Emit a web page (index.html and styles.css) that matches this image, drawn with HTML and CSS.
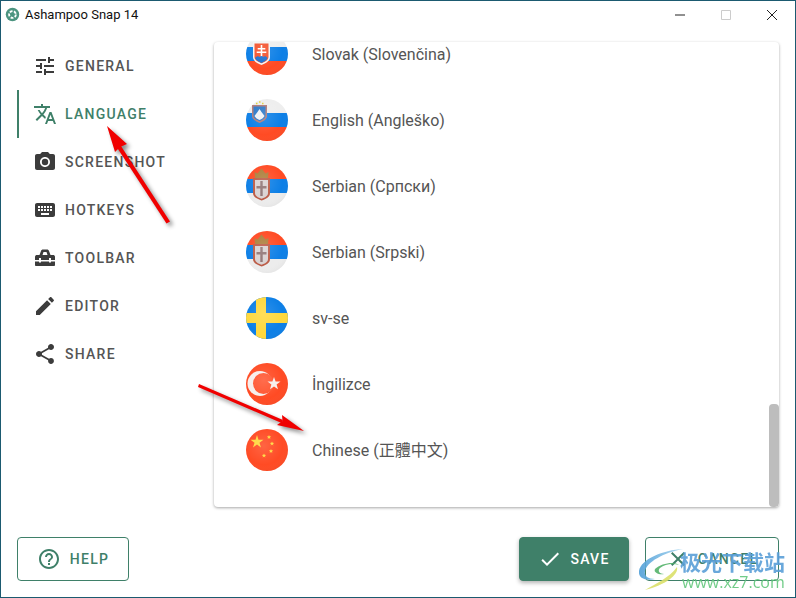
FILE: index.html
```html
<!DOCTYPE html>
<html lang="en">
<head>
  <meta charset="UTF-8" />
  <title>Ashampoo Snap 14</title>
  <link rel="stylesheet" href="styles.css">
</head>
<body>

  <svg class="defs" width="0" height="0">
    <defs>
      <radialGradient id="sheen" cx="0.42" cy="0.4" r="0.7">
        <stop offset="0" stop-color="#fff" stop-opacity="0.14"/>
        <stop offset="0.65" stop-color="#fff" stop-opacity="0"/>
        <stop offset="1" stop-color="#000" stop-opacity="0.06"/>
      </radialGradient>
      <symbol id="serbia" viewBox="0 0 42 42">
        <rect width="42" height="14" fill="#ff4b24"/>
        <rect y="14" width="42" height="14" fill="#0d7fe6"/>
        <rect y="28" width="42" height="14" fill="#ececec"/>
        <path d="M9 13L8.500 7l3 1.500L15.500 3.500l4 5 3-1.500-.5 6z" fill="#ad7f3c"/>
        <path d="M7 13h17v15c0 4-4 6-8.500 7.500C11 34 7 32 7 28z" fill="#bb5a45"/>
        <path d="M9 15h13v13c0 3-3 4.500-6.500 5.700C12 32.500 9 31 9 28z" fill="#d9d2d2"/>
        <path d="M14.300 16h2.400v5h3.800v2.400h-3.800V31h-2.400v-7.600h-3.800V21h3.800z" fill="#8f7474"/>
      </symbol>
      <linearGradient id="swirlBlue" x1="0" y1="0" x2="1" y2="0">
        <stop offset="0" stop-color="#4f9fd8"/>
        <stop offset="1" stop-color="#a9d6f0"/>
      </linearGradient>
    </defs>
  </svg>

  <div class="window">
    <header class="titlebar">
      <svg class="app-logo" viewBox="0 0 16 16">
        <circle cx="8" cy="8" r="7.200" fill="#4c9480"/>
        <circle cx="8" cy="8" r="3.600" fill="none" stroke="#fff" stroke-width="2" stroke-dasharray="3 1.520"/>
        <circle cx="8" cy="8" r="1.900" fill="#4c9480"/>
      </svg>
      <span class="app-title">Ashampoo Snap 14</span>
      <div class="win-controls">
        <span class="win-btn"><svg viewBox="0 0 10 10"><path d="M0 5h10" stroke="#222" fill="none"/></svg></span>
        <span class="win-btn"><svg viewBox="0 0 10 10"><path d="M.5.5h9v9h-9z" stroke="#ccc" fill="none"/></svg></span>
        <span class="win-btn"><svg viewBox="0 0 10 10"><path d="M0 0l10 10M10 0L0 10" stroke="#222" fill="none"/></svg></span>
      </div>
    </header>

    <div class="content">
      <nav class="sidebar">
        <a class="nav-item">
          <svg viewBox="0 0 24 24"><path d="M3 17v2h6v-2H3zM3 5v2h10V5H3zm10 16v-2h8v-2h-8v-2h-2v6h2zM7 9v2H3v2h4v2h2V9H7zm14 4v-2H11v2h10zm-6-4h2V7h4V5h-4V3h-2v6z"/></svg>
          General
        </a>
        <a class="nav-item active">
          <svg viewBox="0 0 24 24"><path d="M12.870 15.070l-2.540-2.510.03-.03c1.740-1.940 2.980-4.170 3.710-6.530H17V4h-7V2H8v2H1v1.990h11.170C11.500 7.920 10.440 9.750 9 11.350 8.070 10.320 7.300 9.190 6.690 8h-2c.73 1.630 1.730 3.170 2.980 4.560l-5.090 5.020L4 19l5-5 3.110 3.110.76-2.040zM18.500 10h-2L12 22h2l1.120-3h4.750L21 22h2l-4.500-12zm-2.620 7l1.620-4.330L19.120 17h-3.240z"/></svg>
          Language
        </a>
        <a class="nav-item">
          <svg viewBox="0 0 24 24"><circle cx="12" cy="12" r="3.200"/><path d="M9 2L7.170 4H4c-1.100 0-2 .9-2 2v12c0 1.100.9 2 2 2h16c1.100 0 2-.9 2-2V6c0-1.100-.9-2-2-2h-3.170L15 2H9zm3 15c-2.760 0-5-2.240-5-5s2.240-5 5-5 5 2.240 5 5-2.240 5-5 5z"/></svg>
          Screenshot
        </a>
        <a class="nav-item">
          <svg viewBox="0 0 24 24"><path d="M20 5H4c-1.100 0-1.990.9-1.990 2L2 17c0 1.100.9 2 2 2h16c1.100 0 2-.9 2-2V7c0-1.100-.9-2-2-2zm-9 3h2v2h-2V8zm0 3h2v2h-2v-2zM8 8h2v2H8V8zm0 3h2v2H8v-2zm-1 2H5v-2h2v2zm0-3H5V8h2v2zm9 7H8v-2h8v2zm0-4h-2v-2h2v2zm0-3h-2V8h2v2zm3 3h-2v-2h2v2zm0-3h-2V8h2v2z"/></svg>
          Hotkeys
        </a>
        <a class="nav-item">
          <svg viewBox="0 0 24 24"><path fill-rule="evenodd" d="M2 11c0-1.500 1-2 2-2h2.500L8 5c.3-1 1-1.500 2-1.500h4c1 0 1.700.5 2 1.500l1.500 4H20c1 0 2 .5 2 2v3h-4v-2h-2v2H8v-2H6v2H2v-3zm7.500-2h5l-1-3h-3l-1 3zM2 15.500h4v1h2v-1h8v1h2v-1h4V19c0 .6-.5 1-1 1H3c-.5 0-1-.4-1-1v-3.500z"/></svg>
          Toolbar
        </a>
        <a class="nav-item">
          <svg viewBox="0 0 24 24"><path d="M3 17.250V21h3.750L17.810 9.940l-3.750-3.750L3 17.250zM20.710 7.040c.39-.39.39-1.020 0-1.410l-2.340-2.340c-.39-.39-1.020-.39-1.410 0l-1.830 1.830 3.750 3.750 1.830-1.830z"/></svg>
          Editor
        </a>
        <a class="nav-item">
          <svg viewBox="0 0 24 24"><path d="M18 16.080c-.76 0-1.440.3-1.960.77L8.910 12.700c.05-.23.09-.46.09-.7s-.04-.47-.09-.7l7.050-4.110c.54.5 1.250.81 2.040.81 1.660 0 3-1.340 3-3s-1.340-3-3-3-3 1.340-3 3c0 .24.04.47.09.7L8.040 9.810C7.500 9.310 6.790 9 6 9c-1.660 0-3 1.340-3 3s1.340 3 3 3c.79 0 1.500-.31 2.040-.81l7.120 4.160c-.05.21-.08.43-.08.65 0 1.610 1.310 2.920 2.920 2.920 1.610 0 2.920-1.310 2.920-2.920s-1.310-2.920-2.920-2.920z"/></svg>
          Share
        </a>
      </nav>

      <section class="card">
        <ul class="lang-list">
          <li class="lang-row">
            <svg class="flag" viewBox="0 0 42 42">
              <rect width="42" height="14" fill="#eee"/>
              <rect y="14" width="42" height="14" fill="#0d7fe6"/>
              <rect y="28" width="42" height="14" fill="#ff4b24"/>
              <path d="M7 9h17v15c0 4-4 6-8.500 8C11 30 7 28 7 24z" fill="#f3f3f3"/>
              <path d="M8.500 10.500h14V24c0 3-3.500 4.700-7 6.300-3.500-1.600-7-3.300-7-6.300z" fill="#f4502a"/>
              <path d="M14.700 12h1.600v3h3v1.500h-3v2h4V20h-4v5h-1.600v-5h-4v-1.500h4v-2h-3V15h3z" fill="#fff"/>
              <path d="M9 25c2-2 3.500-2 4.500-1 1-1.500 3-1.500 4 0 1-1 2.500-1 4 1-1 2.500-3.500 3.700-6 5-2.500-1.300-5.500-2.500-6.500-5z" fill="#1a6fd0"/>
              <rect width="42" height="42" fill="url(#sheen)"/>
            </svg>
            <span>Slovak (Slovenčina)</span>
          </li>
          <li class="lang-row">
            <svg class="flag" viewBox="0 0 42 42">
              <rect width="42" height="14" fill="#eee"/>
              <rect y="14" width="42" height="14" fill="#0d7fe6"/>
              <rect y="28" width="42" height="14" fill="#ff4b24"/>
              <path d="M6 6h15v11c0 3-3 5-7.500 7C9 22 6 20 6 17z" fill="#b07a78"/>
              <path d="M7.500 7.500h12V17c0 2-2.500 3.700-6 5.200-3.500-1.500-6-3.200-6-5.200z" fill="#2b78c8"/>
              <path d="M8.500 17l3-4 2-3 2 3 3 4c-1 2-3 3-5 4-2-1-4-2-5-4z" fill="#f0f2f5"/>
              <path d="M10 4.500h1.500M13 3h1.500M16 4.500h1.500" stroke="#e4d33a" stroke-width="1.300"/>
              <rect width="42" height="42" fill="url(#sheen)"/>
            </svg>
            <span>English (Angleško)</span>
          </li>
          <li class="lang-row">
            <svg class="flag" viewBox="0 0 42 42"><use href="#serbia"/><rect width="42" height="42" fill="url(#sheen)"/></svg>
            <span>Serbian (Српски)</span>
          </li>
          <li class="lang-row">
            <svg class="flag" viewBox="0 0 42 42"><use href="#serbia"/><rect width="42" height="42" fill="url(#sheen)"/></svg>
            <span>Serbian (Srpski)</span>
          </li>
          <li class="lang-row">
            <svg class="flag" viewBox="0 0 42 42">
              <rect width="42" height="42" fill="#0d7fe6"/>
              <rect x="10" width="10" height="42" fill="#ffd83d"/>
              <rect y="16" width="42" height="10" fill="#ffd83d"/>
              <rect width="42" height="42" fill="url(#sheen)"/>
            </svg>
            <span>sv-se</span>
          </li>
          <li class="lang-row">
            <svg class="flag" viewBox="0 0 42 42">
              <rect width="42" height="42" fill="#ff4b24"/>
              <circle cx="14" cy="20.500" r="12.500" fill="#f7efec"/>
              <circle cx="17.500" cy="20.500" r="10.500" fill="#ff5530"/>
              <path d="M28 14l1.600 4.600 4.900-.1-3.900 3 1.400 4.700-4-2.800-4 2.800 1.400-4.700-3.900-3 4.900.1z" fill="#f7efec"/>
              <rect width="42" height="42" fill="url(#sheen)"/>
            </svg>
            <span>İngilizce</span>
          </li>
          <li class="lang-row">
            <svg class="flag" viewBox="0 0 42 42">
              <rect width="42" height="42" fill="#ff4b24"/>
              <path d="M11 6l1.500 4.800h5l-4 3 1.500 4.800-4-3-4 3 1.500-4.800-4-3h5z" fill="#ffd83d"/>
              <path d="M23 6l.6 1.300 1.500.1-1.100 1 .3 1.500-1.300-.8-1.300.8.300-1.500-1.100-1 1.500-.1zM26 12.500l.6 1.300 1.500.1-1.100 1 .3 1.500-1.300-.8-1.300.8.300-1.500-1.100-1 1.500-.1zM25 20l.6 1.300 1.500.1-1.100 1 .3 1.500-1.300-.8-1.300.8.300-1.500-1.100-1 1.500-.1zM18 24.500l.6 1.300 1.500.1-1.100 1 .3 1.500-1.300-.8-1.300.8.300-1.500-1.100-1 1.500-.1z" fill="#ffd83d"/>
              <rect width="42" height="42" fill="url(#sheen)"/>
            </svg>
            <span>Chinese (正體中文)</span>
          </li>
        </ul>
        <div class="scroll-track"><div class="scroll-thumb"></div></div>
      </section>
    </div>

    <footer class="footer">
      <button class="btn btn-help">
        <svg viewBox="0 0 24 24"><path d="M11 18h2v-2h-2v2zm1-16C6.480 2 2 6.480 2 12s4.480 10 10 10 10-4.480 10-10S17.520 2 12 2zm0 18c-4.410 0-8-3.590-8-8s3.590-8 8-8 8 3.590 8 8-3.590 8-8 8zm0-14c-2.210 0-4 1.790-4 4h2c0-1.100.9-2 2-2s2 .9 2 2c0 2-3 1.750-3 5h2c0-2.250 3-2.500 3-5 0-2.210-1.790-4-4-4z"/></svg>
        Help
      </button>
      <div class="footer-right">
        <button class="btn btn-save">
          <svg viewBox="0 0 24 24"><path d="M9 16.170L4.830 12l-1.420 1.410L9 19 21 7l-1.410-1.410z"/></svg>
          Save
        </button>
        <button class="btn btn-cancel">
          <svg viewBox="0 0 24 24"><path d="M19 6.410L17.590 5 12 10.590 6.410 5 5 6.410 10.590 12 5 17.590 6.410 19 12 13.410 17.590 19 19 17.590 13.410 12z"/></svg>
          Cancel
        </button>
      </div>
    </footer>
  </div>

  <!-- red annotation arrows -->
  <svg class="arrows" viewBox="0 0 796 598">
    <g fill="#f00000">
      <path d="M166.500 223.500L116 146l3.500-2.200L170 221.500z"/>
      <path d="M107 126l20 18-7 3-5 5z"/>
      <path d="M198 387l1-3 84 36-1.500 3z"/>
      <path d="M304 431l-22-16 .5 6-5.500 4z"/>
    </g>
  </svg>

  <!-- site watermark -->
  <div class="watermark">
    <svg class="wm-logo" viewBox="0 0 56 44">
      <path d="M46 2C26 3 4 12 2 24c-1 8 8 10 16 8-7 0-11-3-10-8C10 15 26 6 46 2z" fill="url(#swirlBlue)"/>
      <path d="M18 22c6-6 20-8 24-4-6-2-14-1-19 3-3 3 0 6 4 6-4 1-11-1-9-5z" fill="#54b36a"/>
      <path d="M40 20c2 8-12 18-32 23 10-6 24-12 32-23z" fill="#dbe06a"/>
    </svg>
    <div class="wm-text">
      <div class="wm-name">极光下载站</div>
      <div class="wm-url">www.xz7.com</div>
    </div>
  </div>

</body>
</html>
```

FILE: styles.css
```css
:root {
  --green: #3f8069;
  --text: #555;
  --border: #1b5a70;
}

* {
  box-sizing: border-box;
}

body {
  margin: 0;
  width: 796px;
  height: 598px;
  overflow: hidden;
  position: relative;
  background: #fff;
  font-family: Roboto, 'Noto Sans CJK TC', sans-serif;
  color: var(--text);
}

.defs {
  position: absolute;
}

.window {
  width: 796px;
  height: 598px;
  display: flex;
  flex-direction: column;
  border: 1px solid var(--border);
  background: #fff;
}

.titlebar {
  height: 27px;
  display: flex;
  align-items: center;
  padding-left: 4px;
  color: #111;
  font-size: 13px;
}

.app-logo {
  width: 15px;
  height: 15px;
  margin-right: 5px;
}

.win-controls {
  margin-left: auto;
  display: flex;
}

.win-btn {
  width: 46px;
  height: 27px;
  display: flex;
  align-items: center;
  justify-content: center;
}

.win-btn svg {
  width: 10px;
  height: 10px;
}

.content {
  flex: 1;
  display: flex;
  padding-top: 14px;
  min-height: 0;
}

.sidebar {
  width: 213px;
  padding-left: 16px;
  flex-shrink: 0;
}

.nav-item {
  height: 48px;
  display: flex;
  align-items: center;
  gap: 8px;
  padding-left: 16px;
  font-size: 14px;
  font-weight: 500;
  letter-spacing: 1.250px;
  text-transform: uppercase;
}

.nav-item svg {
  width: 24px;
  height: 24px;
  fill: #3c3c3c;
}

.nav-item.active {
  border-left: 2px solid var(--green);
  padding-left: 14px;
  color: var(--green);
}

.nav-item.active svg {
  fill: var(--green);
}

.card {
  width: 565px;
  height: 465px;
  display: flex;
  background: #fff;
  border-radius: 4px;
  box-shadow: 0 1px 3px rgba(0,0,0,0.35);
  overflow: hidden;
}

.lang-list {
  flex: 1;
  list-style: none;
  margin: -21px 0 0;
  padding: 0 0 0 32px;
}

.lang-row {
  height: 66px;
  display: flex;
  align-items: center;
  gap: 24px;
  font-size: 16px;
  line-height: 19px;
}

.lang-row span {
  display: block;
  height: 19px;
}

.flag {
  width: 42px;
  height: 42px;
  border-radius: 50%;
}

.scroll-track {
  width: 10px;
  display: flex;
  flex-direction: column;
  justify-content: flex-end;
}

.scroll-thumb {
  height: 103px;
  background: #bdbdbd;
  border-radius: 4px;
}

.footer {
  height: 89px;
  display: flex;
  justify-content: space-between;
  padding: 29px 16px 0;
}

.footer-right {
  display: flex;
  gap: 16px;
}

.btn {
  height: 44px;
  display: flex;
  align-items: center;
  justify-content: center;
  gap: 8px;
  border-radius: 4px;
  font-family: inherit;
  font-size: 14px;
  font-weight: 500;
  letter-spacing: 1.250px;
  text-transform: uppercase;
  border: 1px solid var(--green);
  background: #fff;
  color: var(--green);
}

.btn svg {
  width: 24px;
  height: 24px;
  fill: currentColor;
}

.btn-help {
  width: 112px;
  gap: 9px;
}

.btn-save {
  width: 110px;
  background: var(--green);
  color: #fff;
  box-shadow: 0 2px 4px rgba(0,0,0,0.3);
}

.btn-cancel {
  width: 134px;
}

.arrows {
  position: absolute;
  left: 0;
  top: 0;
  width: 796px;
  height: 598px;
  filter: drop-shadow(3px 3px 2px rgba(0,0,0,0.45));
}

.watermark {
  position: absolute;
  left: 637px;
  top: 547px;
  display: flex;
  opacity: 0.9;
}

.wm-logo {
  width: 56px;
  height: 44px;
  margin-right: -13px;
}

.wm-text {
  margin-top: 2px;
  white-space: nowrap;
}

.wm-name {
  font-family: 'Noto Sans CJK SC', sans-serif;
  font-size: 21px;
  font-weight: 700;
  line-height: 24px;
  color: #5a9fd8;
}

.wm-url {
  font-family: 'Open Sans', sans-serif;
  font-size: 16px;
  line-height: 18px;
  margin-left: 2px;
  color: #62c77c;
}
```
